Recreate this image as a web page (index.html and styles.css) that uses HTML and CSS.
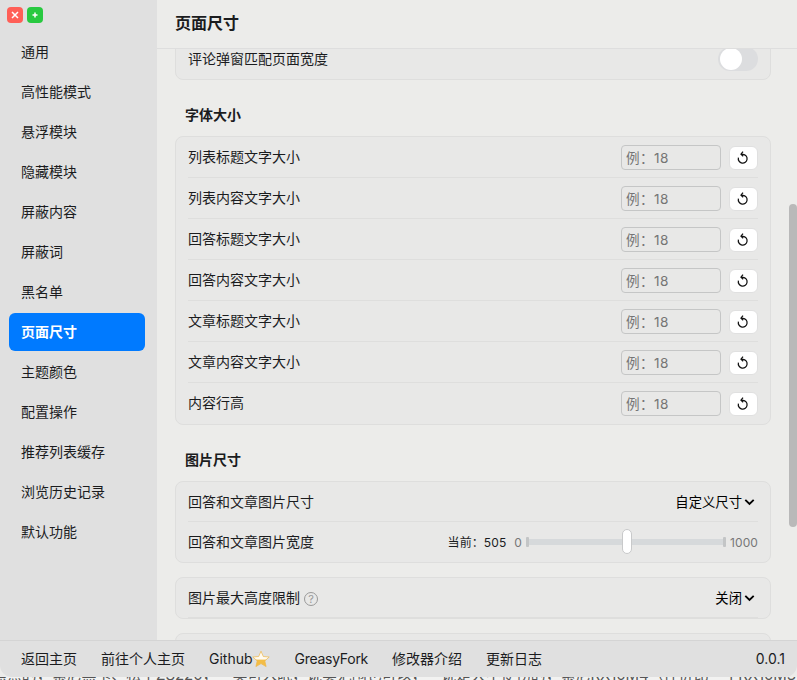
FILE: index.html
```html
<!DOCTYPE html>
<html lang="zh-CN">
<head>
<meta charset="utf-8">
<title>页面尺寸</title>
<link rel="stylesheet" href="styles.css">
</head>
<body>
<svg class="defs" aria-hidden="true">
  <symbol id="reset" viewBox="0 0 12 14"><path d="M1.4 6.7A4.4 4.4 0 1 0 6 3.3H4.4M6 .7 4 3.2 6.2 5.2" /></symbol>
  <symbol id="chevron" viewBox="0 0 11 8"><path d="M1.3 1.9 5.5 5.9 9.7 1.9" /></symbol>
</svg>
<div class="dialog">
  <div class="main">
    <aside class="sidebar">
      <div class="lights">
        <span class="light close"><svg viewBox="0 0 16 16"><path d="M5 5l6 6M11 5l-6 6"/></svg></span>
        <span class="light grow"><svg viewBox="0 0 16 16"><path d="M8 5.5v5M5.5 8h5"/></svg></span>
      </div>
      <nav class="menu">
        <a>通用</a><a>高性能模式</a><a>悬浮模块</a><a>隐藏模块</a><a>屏蔽内容</a><a>屏蔽词</a><a>黑名单</a><a class="active">页面尺寸</a><a>主题颜色</a><a>配置操作</a><a>推荐列表缓存</a><a>浏览历史记录</a><a>默认功能</a>
      </nav>
    </aside>
    <section class="content">
      <h1>页面尺寸</h1>
      <div class="scroll">
        <div class="card first"><div class="row"><span>评论弹窗匹配页面宽度</span><span class="switch"></span></div></div>
        <h2>字体大小</h2>
        <div class="card fonts">
          <div class="row"><span>列表标题文字大小</span><input placeholder="例：18"><button><svg><use href="#reset"/></svg></button></div>
          <div class="row"><span>列表内容文字大小</span><input placeholder="例：18"><button><svg><use href="#reset"/></svg></button></div>
          <div class="row"><span>回答标题文字大小</span><input placeholder="例：18"><button><svg><use href="#reset"/></svg></button></div>
          <div class="row"><span>回答内容文字大小</span><input placeholder="例：18"><button><svg><use href="#reset"/></svg></button></div>
          <div class="row"><span>文章标题文字大小</span><input placeholder="例：18"><button><svg><use href="#reset"/></svg></button></div>
          <div class="row"><span>文章内容文字大小</span><input placeholder="例：18"><button><svg><use href="#reset"/></svg></button></div>
          <div class="row"><span>内容行高</span><input placeholder="例：18"><button><svg><use href="#reset"/></svg></button></div>
        </div>
        <h2>图片尺寸</h2>
        <div class="card">
          <div class="row"><span>回答和文章图片尺寸</span><span class="select">自定义尺寸<svg><use href="#chevron"/></svg></span></div>
          <div class="row"><span>回答和文章图片宽度</span><span class="range"><span class="current">当前：505</span><span class="min">0</span><span class="track"><i class="thumb"></i></span><span class="max">1000</span></span></div>
        </div>
        <div class="card single">
          <div class="row"><span>图片最大高度限制<i class="help">?</i></span><span class="select">关闭<svg><use href="#chevron"/></svg></span></div>
        </div>
        <div class="card next"><div class="row"></div></div>
      </div>
      <span class="scrollbar"></span>
    </section>
  </div>
  <footer>
    <a>返回主页</a><a>前往个人主页</a><a class="github">Github<svg viewBox="0 0 18 18"><defs><linearGradient id="gold" x2="0" y2="1"><stop offset=".5" stop-color="#fffaf0"/><stop offset=".6" stop-color="#f3bd46"/></linearGradient></defs><path d="M9 1.2l2.3 5.3 5.9.5-4.4 3.9 1.3 5.7L9 13.6l-5.1 3 1.3-5.7L.8 7l5.9-.5z"/></svg></a><a class="fork">GreasyFork</a><a>修改器介绍</a><a>更新日志</a><span class="version">0.0.1</span>
  </footer>
</div>
<div class="backdrop"><p>焦点的，索尼黑卡、松下ZS220，一类可入眠，说实范围也可以，一说是大不便拐的，索尼RX10M4（性价比三丁RX10M3），</p></div>
</body>
</html>
```
FILE: styles.css
```css
* { box-sizing: border-box; }
body { margin: 0; height: 680px; overflow: hidden; background: #ececea; color: #1b1c1e; font: 14px/20px Inter, "Noto Sans CJK SC", sans-serif; }
.defs { position: absolute; width: 0; height: 0; }
.backdrop { height: 3px; overflow: hidden; background: #f2f2f1; }
.backdrop p { margin: -12px 0 0 -8px; font-size: 15px; line-height: 20px; letter-spacing: -.08px; white-space: nowrap; color: #555; }
.dialog { height: 677px; display: flex; flex-direction: column; background: #ececea; border-radius: 0 0 12px 12px; overflow: hidden; }
.main { height: 640px; display: flex; }
.sidebar { width: 157px; background: #e0e0e0; padding: 7px 12px 0 9px; }
.lights { display: flex; gap: 4px; height: 26px; margin-left: -2px; }
.light { width: 16px; height: 16px; border-radius: 4px; }
.light svg { display: block; width: 16px; height: 16px; stroke: #fff; stroke-width: 1.5; fill: none; }
.close { background: #ff5f57; }
.grow { background: #28c940; }
.menu { display: flex; flex-direction: column; gap: 2px; }
.menu a { height: 38px; padding: 0 12px; line-height: 38px; border-radius: 6px; }
.menu .active { background: #007aff; color: #fff; font-weight: 600; }
.content { flex: 1; position: relative; display: flex; flex-direction: column; min-width: 0; }
h1 { height: 49px; flex: none; margin: 0; padding: 0 18px; border-bottom: 1px solid #dedede; font-size: 16px; line-height: 46px; font-weight: 600; }
.scroll { flex: 1; min-height: 0; overflow: hidden; padding: 0 26px 0 18px; }
.card { border: 1px solid #dededd; border-radius: 8px; background: #e8e8e7; padding: 0 12px; }
.row { height: 40px; display: flex; align-items: center; border-bottom: 1px solid #dededd; }
.row > span:first-child { flex: 1; }
.row:last-child { border-bottom-color: transparent; }
.first { margin-top: -10px; height: 41px; }
.first .row { height: 38px; }
.switch { width: 40px; height: 24px; border-radius: 12px; background: #dcdddf; padding: 1px 2px; }
.switch::before { content: ""; display: block; width: 22px; height: 22px; border-radius: 50%; background: #fff; }
h2 { margin: 24px 10px 10px; height: 22px; font-size: 14px; line-height: 22px; font-weight: 600; }
.fonts .row { height: 41px; }
input { width: 100px; height: 25px; margin: 0 8px 0 0; border: 1px solid #c5c6c6; border-radius: 4px; padding: 1px 4px 0; background: transparent; font: inherit; font-size: 13.6px; letter-spacing: .4px; }
input::placeholder { color: #757575; opacity: 1; }
button { width: 29px; height: 24px; margin: 1px 0 0; padding: 0 1px 0 0; border: 1px solid #e0e0e0; border-radius: 6px; background: #fff; display: grid; place-items: center; }
button svg { width: 12px; height: 14px; stroke: #111; stroke-width: 1.25; fill: none; }
.select { display: flex; align-items: center; color: #000; font-size: 13.33px; padding-right: 3px; }
.select svg { width: 11px; height: 8px; margin-left: 2px; stroke: #000; stroke-width: 1.9; fill: none; }
.range { display: flex; align-items: center; color: #777; font-size: 12px; letter-spacing: .1px; }
.current, .min, .max { padding-top: 2px; }
.current { color: #1b1c1e; margin-right: 8px; }
.track { position: relative; width: 200px; height: 6px; margin: 0 4px; background: #d6d9db; }
.track::before, .track::after { content: ""; position: absolute; top: -2px; width: 3px; height: 10px; border-radius: 1px; background: #c3c5c6; }
.track::before { left: 0; }
.track::after { right: 0; }
.thumb { position: absolute; z-index: 1; left: 96px; top: -10px; width: 10px; height: 25px; border: 1px solid #c8c9ca; border-radius: 5px; background: #fff; }
.single { margin-top: 14px; }
.single .row { border-bottom-color: #dededd; }
.help { display: inline-block; width: 14px; height: 14px; margin-left: 4px; border: 1px solid #999; border-radius: 50%; color: #999; font: 11px/12px Inter, sans-serif; text-align: center; vertical-align: 0; }
.next { margin-top: 14px; }
.scrollbar { position: absolute; right: 0; top: 204px; width: 8px; height: 323px; border-radius: 4px; background: #b9b9b9; }
footer { height: 37px; display: flex; align-items: center; gap: 24px; padding: 0 12px 0 21px; border-top: 1px solid #d4d4d4; background: #e0e0e0; }
.github { display: flex; align-items: center; }
.github svg { width: 18px; height: 18px; margin-left: -1px; margin-right: 1px; fill: url(#gold); stroke: #efb847; stroke-width: .7; }
.fork { letter-spacing: -.28px; }
.version { margin-left: auto; }
```
